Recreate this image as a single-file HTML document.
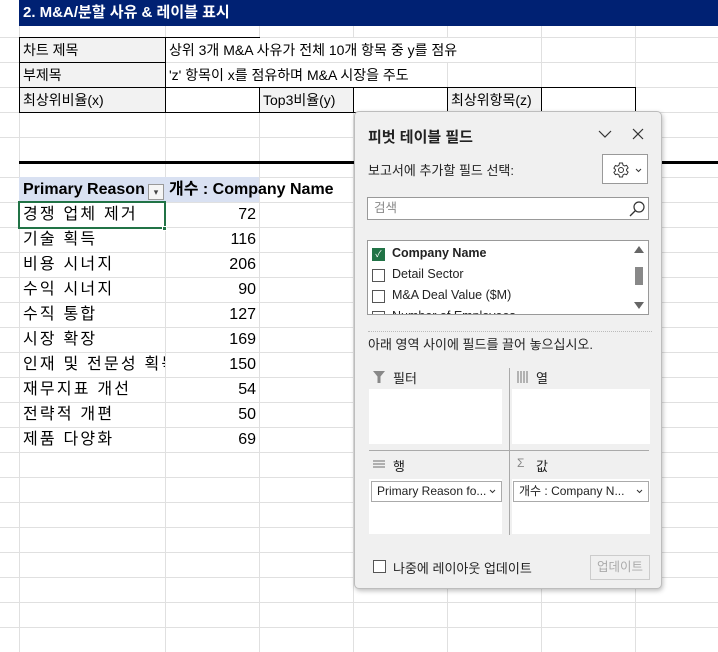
<!DOCTYPE html>
<html><head><meta charset="utf-8"><style>
*{margin:0;padding:0;box-sizing:border-box}
body{width:718px;height:652px;overflow:hidden;position:relative;background:#fff;font-family:"Liberation Sans","Noto Sans CJK KR",sans-serif;font-size:14px;color:#000}
.a{position:absolute}
.vl{position:absolute;top:0;width:1px;height:652px;background:#e0e0e0}
.hl{position:absolute;left:0;height:1px;width:718px;background:#e0e0e0}
.c{position:absolute;border:1px solid #000;height:26px;line-height:24px;padding-left:3px;white-space:nowrap;overflow:hidden}
.g{background:#f2f2f2}
.t{position:absolute;left:23px;font-size:16px;height:25px;line-height:25px;white-space:nowrap;letter-spacing:2.2px}
.n{position:absolute;left:165px;width:91px;text-align:right;font-size:16px;height:25px;line-height:25px}
.p{font-size:13px;color:#222}
.box{position:absolute;background:#fff}
.cb{position:absolute;width:13px;height:13px;border:1px solid #555;background:#fff}
.dd{position:absolute;height:21px;border:1px solid #aaa;background:#fff;font-size:12px;line-height:19px;padding-left:5px;white-space:nowrap;color:#222;overflow:hidden}
.dd svg{position:absolute;right:5px;top:7px}
</style></head><body>
<div class="vl" style="left:19px"></div><div class="vl" style="left:165px"></div><div class="vl" style="left:259px"></div><div class="vl" style="left:353px"></div><div class="vl" style="left:447px"></div><div class="vl" style="left:541px"></div><div class="vl" style="left:635px"></div>
<div class="hl" style="top:37px"></div><div class="hl" style="top:62px"></div><div class="hl" style="top:87px"></div><div class="hl" style="top:112px"></div><div class="hl" style="top:137px"></div><div class="hl" style="top:177px"></div>
<div class="hl" style="top:202px"></div><div class="hl" style="top:227px"></div><div class="hl" style="top:252px"></div><div class="hl" style="top:277px"></div><div class="hl" style="top:302px"></div><div class="hl" style="top:327px"></div><div class="hl" style="top:352px"></div><div class="hl" style="top:377px"></div><div class="hl" style="top:402px"></div><div class="hl" style="top:427px"></div><div class="hl" style="top:452px"></div><div class="hl" style="top:477px"></div><div class="hl" style="top:502px"></div><div class="hl" style="top:527px"></div><div class="hl" style="top:552px"></div><div class="hl" style="top:577px"></div><div class="hl" style="top:602px"></div><div class="hl" style="top:627px"></div>
<div class="a" style="left:19px;top:0;width:699px;height:26px;background:#002173;color:#fff;font-weight:bold;font-size:15px;line-height:25px;padding-left:4px">2. M&amp;A/분할 사유 &amp; 레이블 표시</div>
<div class="a" style="left:19px;top:37px;width:241px;height:1px;background:#000"></div>
<div class="c g" style="left:19px;top:37px;width:147px">차트 제목</div>
<div class="a" style="left:165px;top:37px;width:1px;height:75px;background:#000"></div>
<div class="a" style="left:169px;top:38px;height:24px;line-height:24px;white-space:nowrap;background:#fff;width:290px">상위 3개 M&amp;A 사유가 전체 10개 항목 중 y를 점유</div>
<div class="c g" style="left:19px;top:62px;width:147px">부제목</div>
<div class="a" style="left:169px;top:63px;height:24px;line-height:24px;white-space:nowrap;background:#fff;width:270px">'z' 항목이 x를 점유하며 M&amp;A 시장을 주도</div>
<div class="a" style="left:165px;top:87px;width:471px;height:1px;background:#000"></div>
<div class="c g" style="left:19px;top:87px;width:147px">최상위비율(x)</div>
<div class="c" style="left:165px;top:87px;width:95px"></div>
<div class="c g" style="left:259px;top:87px;width:95px">Top3비율(y)</div>
<div class="c" style="left:353px;top:87px;width:95px"></div>
<div class="c g" style="left:447px;top:87px;width:95px">최상위항목(z)</div>
<div class="c" style="left:541px;top:87px;width:95px"></div>
<div class="a" style="left:19px;top:161px;width:699px;height:3px;background:#000"></div>
<div class="a" style="left:19px;top:177px;width:240px;height:25px;background:#d9e1f2"></div>
<div class="a" style="left:23px;top:177px;font-weight:bold;font-size:16px;line-height:25px;white-space:nowrap;width:142px;overflow:hidden">Primary Reason</div>
<div class="a" style="left:148px;top:184px;width:16px;height:16px;border:1px solid #999;background:#f5f5f5;font-size:9px;text-align:center;line-height:14px;color:#444">▾</div>
<div class="a" style="left:169px;top:177px;font-weight:bold;font-size:16px;line-height:25px;white-space:nowrap">개수 : Company Name</div>
<div class="t" style="top:202px">경쟁 업체 제거</div><div class="n" style="top:202px">72</div>
<div class="t" style="top:227px">기술 획득</div><div class="n" style="top:227px">116</div>
<div class="t" style="top:252px">비용 시너지</div><div class="n" style="top:252px">206</div>
<div class="t" style="top:277px">수익 시너지</div><div class="n" style="top:277px">90</div>
<div class="t" style="top:302px">수직 통합</div><div class="n" style="top:302px">127</div>
<div class="t" style="top:327px">시장 확장</div><div class="n" style="top:327px">169</div>
<div class="t" style="top:352px;width:142px;overflow:hidden">인재 및 전문성 획득</div><div class="n" style="top:352px">150</div>
<div class="t" style="top:377px">재무지표 개선</div><div class="n" style="top:377px">54</div>
<div class="t" style="top:402px">전략적 개편</div><div class="n" style="top:402px">50</div>
<div class="t" style="top:427px">제품 다양화</div><div class="n" style="top:427px">69</div>
<div class="a" style="left:18px;top:201px;width:148px;height:28px;border:2px solid #217346"></div>
<div class="a" style="left:162px;top:226px;width:5px;height:5px;background:#217346;border:1px solid #fff"></div>

<div class="a" style="left:354px;top:111px;width:308px;height:478px;background:#f0f0f0;border:1px solid #bdbdbd;border-radius:5px;box-shadow:1px 2px 5px rgba(0,0,0,.25)">
 <div class="a" style="left:13px;top:14px;font-size:15px;font-weight:bold;color:#222">피벗 테이블 필드</div>
 <svg class="a" style="left:243px;top:17px" width="14" height="10"><path d="M1 2l6 6 6-6" fill="none" stroke="#333" stroke-width="1.2"/></svg>
 <svg class="a" style="left:277px;top:16px" width="12" height="12"><path d="M1 1l10 10M11 1L1 11" stroke="#333" stroke-width="1.2"/></svg>
 <div class="a p" style="left:13px;top:48px">보고서에 추가할 필드 선택:</div>
 <div class="a" style="left:247px;top:42px;width:46px;height:30px;border:1px solid #999;background:#fff">
  <svg class="a" style="left:9px;top:6px" width="18" height="18" viewBox="0 0 18 18"><circle cx="9" cy="9" r="2.5" fill="none" stroke="#333"/><path d="M7.5 2h3l.5 2 1.6 1 2-.7 1.5 2.6-1.5 1.4v1.4l1.5 1.4-1.5 2.6-2-.7-1.6 1-.5 2h-3l-.5-2-1.6-1-2 .7L1.9 11.3l1.5-1.4V8.5L1.9 7.1 3.4 4.5l2 .7 1.6-1z" fill="none" stroke="#333"/></svg>
  <svg class="a" style="left:32px;top:13px" width="7" height="5"><path d="M1 1l2.5 2.5L6 1" fill="none" stroke="#333"/></svg>
 </div>
 <div class="a" style="left:12px;top:85px;width:282px;height:23px;border:1px solid #999;background:#fff;font-size:12.5px;color:#888;padding-left:6px;line-height:20px">검색
  <svg class="a" style="left:260px;top:2px" width="18" height="18"><circle cx="11" cy="7" r="5" fill="none" stroke="#333" stroke-width="1.2"/><path d="M7.5 10.5L2 16" stroke="#333" stroke-width="1.3"/></svg></div>
 <div class="a" style="left:12px;top:128px;width:282px;height:75px;border:1px solid #999;background:#fff;overflow:hidden">
  <div class="a" style="left:4px;top:7px;width:13px;height:13px;background:#217346;color:#fff;font-size:9px;text-align:center;line-height:13px">✓</div>
  <div class="a" style="left:24px;top:5px;font-size:12.5px;font-weight:bold;color:#222">Company Name</div>
  <div class="cb" style="left:4px;top:28px"></div><div class="a p" style="left:24px;top:26px;font-size:12.5px">Detail Sector</div>
  <div class="cb" style="left:4px;top:49px"></div><div class="a p" style="left:24px;top:47px;font-size:12.5px">M&amp;A Deal Value ($M)</div>
  <div class="cb" style="left:4px;top:70px"></div><div class="a p" style="left:24px;top:68px;font-size:12.5px">Number of Employees</div>
  <div class="a" style="left:263px;top:0;width:17px;height:73px;background:#fff"></div>
  <svg class="a" style="left:266px;top:5px" width="10" height="7"><path d="M0 7L5 0l5 7z" fill="#666"/></svg>
  <div class="a" style="left:267px;top:26px;width:8px;height:18px;background:#888"></div>
  <svg class="a" style="left:266px;top:61px" width="10" height="7"><path d="M0 0l5 7 5-7z" fill="#666"/></svg>
 </div>
 <div class="a" style="left:13px;top:219px;width:284px;border-top:1px dotted #bbb"></div>
 <div class="a p" style="left:13px;top:222px">아래 영역 사이에 필드를 끌어 놓으십시오.</div>
 <div class="a" style="left:154px;top:256px;width:1px;height:167px;background:#aaa"></div>
 <div class="a" style="left:14px;top:338px;width:280px;height:1px;background:#aaa"></div>
 <svg class="a" style="left:18px;top:259px" width="12" height="12"><path d="M0 0h12L7.5 5.5V12h-3V5.5z" fill="#888"/></svg>
 <svg class="a" style="left:162px;top:259px" width="12" height="12"><path d="M1 0v12M4 0v12M7 0v12M10 0v12" stroke="#888" stroke-width="1.2"/></svg>
 <div class="a p" style="left:38px;top:256px">필터</div>
 <div class="a p" style="left:181px;top:256px">열</div>
 <div class="box" style="left:14px;top:277px;width:133px;height:55px"></div>
 <div class="box" style="left:157px;top:277px;width:138px;height:55px"></div>
 <svg class="a" style="left:18px;top:348px" width="12" height="9"><path d="M0 1h12M0 4h12M0 7h12" stroke="#888" stroke-width="1.2"/></svg>
 <div class="a p" style="left:38px;top:344px">행</div>
 <div class="a" style="left:162px;top:344px;font-size:12px;color:#888">Σ</div>
 <div class="a p" style="left:181px;top:344px">값</div>
 <div class="box" style="left:14px;top:367px;width:133px;height:55px"></div>
 <div class="box" style="left:157px;top:367px;width:138px;height:55px"></div>
 <div class="dd" style="left:16px;top:369px;width:131px">Primary Reason fo...<svg width="7" height="5"><path d="M1 1l2.5 2.5L6 1" fill="none" stroke="#333"/></svg></div>
 <div class="dd" style="left:158px;top:369px;width:136px">개수 : Company N...<svg width="7" height="5"><path d="M1 1l2.5 2.5L6 1" fill="none" stroke="#333"/></svg></div>
 <div class="cb" style="left:18px;top:448px;width:13px;height:13px"></div>
 <div class="a p" style="left:38px;top:446px">나중에 레이아웃 업데이트</div>
 <div class="a" style="left:235px;top:443px;width:60px;height:25px;border:1px solid #ccc;color:#aaa;font-size:12.5px;text-align:center;line-height:23px">업데이트</div>
</div>
</body></html>
